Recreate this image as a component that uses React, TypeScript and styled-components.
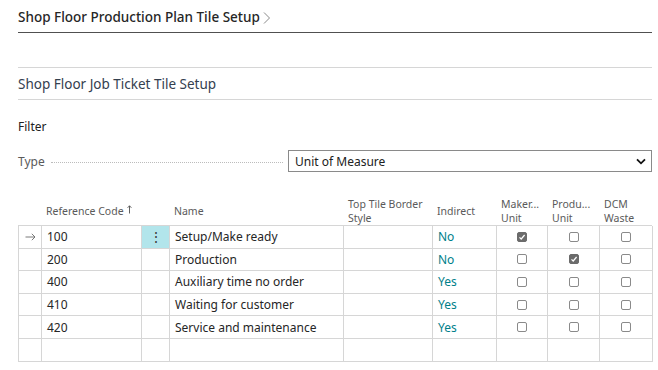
import React from 'react'
import styled, { createGlobalStyle } from 'styled-components'

interface Line {
    arrow?: boolean
    code: string
    name: string
    indirect: boolean
    maker: boolean
    produ: boolean
    waste: boolean
}

const lines: Line[] = [
    { arrow: true, code: '100', name: 'Setup/Make ready', indirect: false, maker: true, produ: false, waste: false },
    { code: '200', name: 'Production', indirect: false, maker: false, produ: true, waste: false },
    { code: '400', name: 'Auxiliary time no order', indirect: true, maker: false, produ: false, waste: false },
    { code: '410', name: 'Waiting for customer', indirect: true, maker: false, produ: false, waste: false },
    { code: '420', name: 'Service and maintenance', indirect: true, maker: false, produ: false, waste: false },
]

const COLS = '23px 100px 28px 174px 89px 64px 51px 52px 53px'

const Check: React.FC<{ on: boolean }> = ({ on }) => (
    <Box $on={on}>
        {on && (
            <svg width="8" height="8" viewBox="0 0 8 8">
                <path d="M1.5 4.3 L3.2 6 L6.6 2" fill="none" stroke="#fff" strokeWidth="1.2" />
            </svg>
        )}
    </Box>
)

const App: React.FC = () => {
    return (
        <Page>
            <GlobalStyle />
            <MainTitleRow>
                <MainTitle>Shop Floor Production Plan Tile Setup</MainTitle>
                <Chevron width="8" height="14" viewBox="0 0 8 14">
                    <path d="M1 1.5 L6.5 7 L1 12.5" fill="none" stroke="#8a8a8a" strokeWidth="1" />
                </Chevron>
            </MainTitleRow>
            <SubTitle>Shop Floor Job Ticket Tile Setup</SubTitle>
            <FilterLabel>Filter</FilterLabel>
            <FieldRow>
                <FieldLabel>Type</FieldLabel>
                <Leader />
                <Select>
                    <span>Unit of Measure</span>
                    <svg width="10" height="7" viewBox="0 0 10 7">
                        <path d="M1 1.3 L5 5.3 L9 1.3" fill="none" stroke="#111" strokeWidth="1.8" />
                    </svg>
                </Select>
            </FieldRow>
            <Grid>
                <HeadRow>
                    <HeadCell />
                    <HeadCell>
                        Reference Code
                        <SortArrow width="5" height="9" viewBox="0 0 5 9">
                            <path d="M2.5 0.8 V8.5 M0.6 2.8 L2.5 0.8 L4.4 2.8" fill="none" stroke="#505050" strokeWidth="0.9" />
                        </SortArrow>
                    </HeadCell>
                    <HeadCell />
                    <HeadCell>Name</HeadCell>
                    <HeadCell>
                        Top Tile Border
                        <br />
                        Style
                    </HeadCell>
                    <HeadCell>Indirect</HeadCell>
                    <HeadCell>
                        Maker...
                        <br />
                        Unit
                    </HeadCell>
                    <HeadCell>
                        Produ...
                        <br />
                        Unit
                    </HeadCell>
                    <HeadCell>
                        DCM
                        <br />
                        Waste
                    </HeadCell>
                </HeadRow>
                <Body>
                    {lines.map(l => (
                        <Row key={l.code}>
                            <Cell $center>
                                {l.arrow && (
                                    <svg width="11" height="8" viewBox="0 0 11 8">
                                        <path d="M0.5 4 H10 M6.8 0.8 L10 4 L6.8 7.2" fill="none" stroke="#6b6b6b" strokeWidth="0.9" />
                                    </svg>
                                )}
                            </Cell>
                            <Cell>{l.code}</Cell>
                            <Cell $center $active={l.arrow}>
                                {l.arrow && <Dots>⋮</Dots>}
                            </Cell>
                            <Cell>{l.name}</Cell>
                            <Cell />
                            <Cell $link>{l.indirect ? 'Yes' : 'No'}</Cell>
                            <Cell $center>
                                <Check on={l.maker} />
                            </Cell>
                            <Cell $center>
                                <Check on={l.produ} />
                            </Cell>
                            <Cell $center>
                                <Check on={l.waste} />
                            </Cell>
                        </Row>
                    ))}
                    <Row>
                        {Array.from({ length: 9 }).map((_, i) => (
                            <Cell key={i} />
                        ))}
                    </Row>
                </Body>
            </Grid>
        </Page>
    )
}

export default App

const GlobalStyle = createGlobalStyle`
    body {
        margin: 0;
        background: #fff;
        font-family: 'Segoe UI', 'Noto Sans', sans-serif;
        color: #212121;
    }
`

const Page = styled.div`
    width: 658px;
    height: 370px;
    padding: 0 6px 0 18px;
    box-sizing: border-box;
    overflow: hidden;
`

const MainTitleRow = styled.div`
    display: flex;
    align-items: center;
    gap: 3px;
    height: 33px;
    padding-top: 2px;
    box-sizing: border-box;
    border-bottom: 1px solid #505050;
`

const MainTitle = styled.div`
    font-size: 13.5px;
    font-weight: 500;
    color: #262626;
`

const Chevron = styled.svg`
    margin-top: 1px;
`

const SubTitle = styled.div`
    margin-top: 34px;
    height: 31px;
    border-top: 1px solid #d6d6d6;
    border-bottom: 1px solid #d6d6d6;
    display: flex;
    align-items: center;
    font-size: 13.5px;
    color: #34404f;
`

const FilterLabel = styled.div`
    margin-top: 18px;
    font-size: 12px;
    color: #212121;
`

const FieldRow = styled.div`
    display: flex;
    align-items: center;
    margin-top: 15px;
    height: 22px;
`

const FieldLabel = styled.div`
    font-size: 12px;
    color: #5a5a5a;
    margin-right: 6px;
`

const Leader = styled.div`
    flex: 1;
    height: 0;
    border-bottom: 1px dotted #bcbcbc;
    margin: 3px 5px 0 0;
`

const Select = styled.div`
    width: 364px;
    height: 22px;
    box-sizing: border-box;
    border: 1px solid #8a8a8a;
    display: flex;
    align-items: center;
    justify-content: space-between;
    padding: 0 5px 0 6px;
    font-size: 12px;
    color: #212121;
`

const Grid = styled.div`
    margin-top: 22px;
    width: 634px;
`

const HeadRow = styled.div`
    display: grid;
    grid-template-columns: ${COLS};
    height: 31px;
`

const HeadCell = styled.div`
    display: flex;
    align-items: center;
    padding: 2px 0 0 5px;
    font-size: 10.5px;
    line-height: 14px;
    color: #5a5a5a;
    white-space: nowrap;
`

const SortArrow = styled.svg`
    margin: 0 0 3px 3px;
`

const Body = styled.div`
    border-top: 1px solid #d6d6d6;
    border-left: 1px solid #d6d6d6;
`

const Row = styled.div`
    display: grid;
    grid-template-columns: ${COLS};
    height: 22.6px;
`

const Cell = styled.div<{ $center?: boolean; $active?: boolean; $link?: boolean }>`
    display: flex;
    align-items: center;
    justify-content: ${p => (p.$center ? 'center' : 'flex-start')};
    padding-left: ${p => (p.$center ? '0' : '5px')};
    border-right: 1px solid #d6d6d6;
    border-bottom: 1px solid #d6d6d6;
    font-size: 12px;
    color: ${p => (p.$link ? '#00808a' : '#262626')};
    background: ${p => (p.$active ? '#b2e5eb' : 'transparent')};
    overflow: hidden;
    white-space: nowrap;
`

const Dots = styled.span`
    color: #3c3c3c;
    font-size: 14px;
`

const Box = styled.div<{ $on: boolean }>`
    width: 10px;
    height: 10px;
    box-sizing: border-box;
    border-radius: 2px;
    border: 1px solid ${p => (p.$on ? '#6b6b6b' : '#8a8a8a')};
    background: ${p => (p.$on ? '#6b6b6b' : '#fff')};
    display: flex;
    align-items: center;
    justify-content: center;
`
